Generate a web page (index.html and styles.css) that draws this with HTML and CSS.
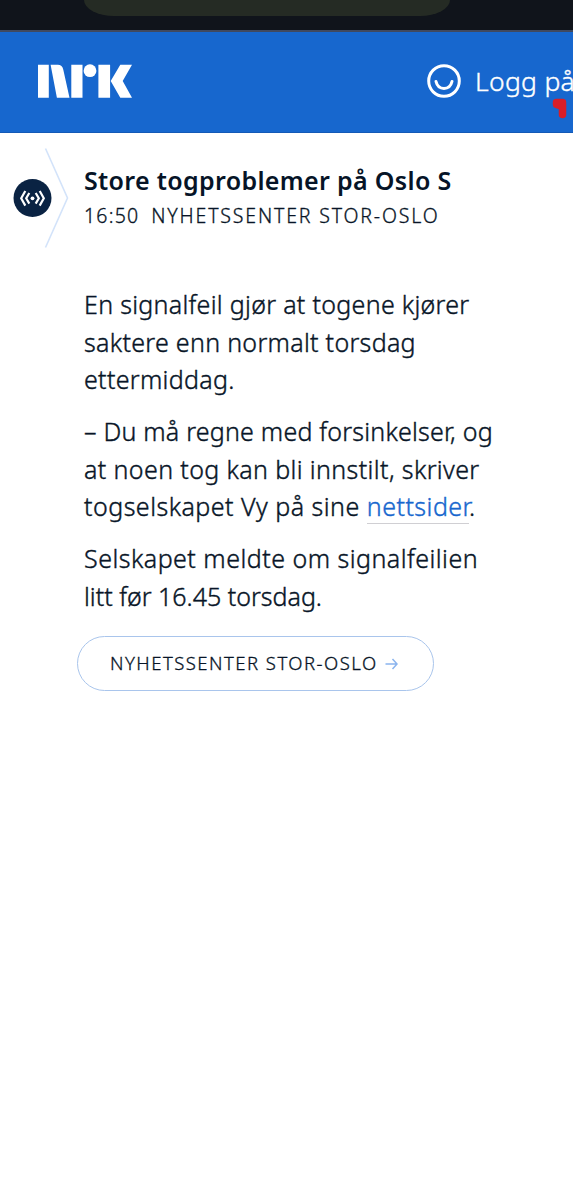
FILE: index.html
```html
<!DOCTYPE html>
<html lang="no">
<head>
<meta charset="utf-8">
<title>Store togproblemer på Oslo S</title>
<link rel="stylesheet" href="styles.css">
</head>
<body>
<div class="browser-bar"><div class="address-pill"></div></div>
<header class="site-header">
  <svg class="logo" viewBox="0 0 94 34" role="img" aria-label="NRK">
    <path d="M0 .8h10.800v32.900H0zM12.600.8h7.200q4.500 0 5.500 5l6.200 27.900H18.900zM33.300.8h11.200v32.900H33.300zM60.400.8h11.700v32.900H60.400zM82.300.8H94L84.700 17 94 33.700H82.300L72.700 17z"/>
    <circle cx="52" cy="6.700" r="6.400"/>
  </svg>
  <div class="login">
    <svg class="login-icon" viewBox="0 0 34 34"><circle cx="17" cy="17" r="15.300"/><path d="M9 17.500c2.200 9.300 13.800 9.300 16 0"/></svg>
    <span class="login-text">Logg på</span>
    <svg class="red-mark" viewBox="0 0 15 21"><path d="M4.500 4.500h6v12M4.500 4.500v2l6 2"/></svg>
  </div>
</header>
<main class="feed">
  <article class="post">
    <div class="marker">
      <svg class="marker-icon" viewBox="0 0 72 110">
        <path class="chevron" d="M45.500 8.500 67.500 58 45.500 107.500"/>
        <circle class="disc" cx="32.500" cy="58" r="19"/>
        <path class="waves" d="M25.300 51 21.200 58.300l4.100 7.300M29.300 53 26.200 58.300l3.100 5.300M39.700 51l4.100 7.300-4.100 7.300M35.700 53l3.100 5.300-3.100 5.300"/>
        <circle class="dot" cx="32.500" cy="58.300" r="1.900"/>
      </svg>
    </div>
    <div class="content">
      <h1 class="title">Store togproblemer på Oslo S</h1>
      <div class="meta"><time>16:50</time><span class="source">NYHETSSENTER STOR-OSLO</span></div>
      <div class="body">
        <p><span class="line l1">En signalfeil gjør at togene kjører</span> <span class="line l2">saktere enn normalt torsdag</span> <span class="line l3">ettermiddag.</span></p>
        <p><span class="line l4">– Du må regne med forsinkelser, og</span> <span class="line l5">at noen tog kan bli innstilt, skriver</span> <span class="line l6">togselskapet Vy på sine <a class="link">nettsider</a>.</span></p>
        <p><span class="line l7">Selskapet meldte om signalfeilien</span> <span class="line l8">litt før 16.45 torsdag.</span></p>
      </div>
      <a class="more"><span class="more-label">NYHETSSENTER STOR-OSLO</span><svg class="arrow" viewBox="0 0 13 12"><path d="M.5 6H12M7.500 1l4.500 5-4.500 5"/></svg></a>
    </div>
  </article>
</main>
</body>
</html>
```
FILE: styles.css
```css
* { box-sizing: border-box; }
body {
  margin: 0;
  min-height: 1200px;
  background: #fff;
  color: #081527;
  font-family: "Noto Sans", sans-serif;
  overflow: hidden;
}
.browser-bar {
  height: 32px;
  background: #10141b;
  border-bottom: 2px solid #40495f;
  padding-left: 84px;
}
.address-pill {
  width: 366px;
  height: 16px;
  background: #252b24;
  border-radius: 0 0 30px 30px / 0 0 16px 16px;
}
.site-header {
  height: 101px;
  background: #1767ce;
  display: flex;
  align-items: center;
  justify-content: space-between;
  padding: 0 0 2px 38px;
  border-bottom: 1px solid #1459b6;
}
.logo { width: 94px; height: 34px; fill: #fff; }
.login {
  position: relative;
  width: 146px;
  display: flex;
  align-items: center;
  gap: 14px;
  white-space: nowrap;
  color: #fff;
}
.login-icon { flex: none; width: 34px; height: 34px; fill: none; stroke: #fff; stroke-width: 3; stroke-linecap: round; }
.login-text { font-size: 26.5px; line-height: 36px; font-weight: 300; letter-spacing: .3px; -webkit-text-stroke: .4px currentColor; }
.red-mark { position: absolute; left: 125px; top: 35px; width: 15px; height: 21px; fill: none; stroke: #d81e28; stroke-width: 7.5; stroke-linecap: round; stroke-linejoin: round; }
.post { display: grid; grid-template-columns: 84px 1fr; padding-top: 7px; }
.marker-icon { display: block; width: 72px; height: 110px; fill: none; }
.chevron { stroke: #d3e3fa; stroke-width: 1.6; }
.disc { fill: #0a2343; }
.waves { stroke: #fff; stroke-width: 2.2; }
.dot { fill: #fff; }
.content { padding-top: 21px; }
.title { margin: 0; font-size: 25px; font-weight: 600; line-height: 38px; letter-spacing: .33px; color: #061427; white-space: nowrap; }
.meta { display: flex; gap: 12px; padding-top: 1px; font-size: 19.5px; line-height: 32px; font-weight: 300; letter-spacing: 1.2px; -webkit-text-stroke: .3px currentColor; }
.source { letter-spacing: 1.83px; }
.body { padding-top: 54px; font-size: 25px; line-height: 37.5px; font-weight: 300; -webkit-text-stroke: .4px currentColor; }
.body p { margin: 0 0 14.5px; }
.line { display: block; white-space: nowrap; }
.l1, .l2, .l3 { letter-spacing: .3px; }
.l4 { letter-spacing: .22px; }
.l5 { letter-spacing: .38px; }
.l6, .l7 { letter-spacing: .48px; }
.link { color: #1767ce; border-bottom: 1.5px solid #d0cfd3; }
.more {
  display: flex;
  align-items: center;
  width: 357px;
  height: 55px;
  margin: 20.5px 0 0 -7px;
  padding: 0 0 2px 32px;
  border: 1.3px solid #a9c5ec;
  border-radius: 28px;
  font-size: 18.5px;
  font-weight: 300;
  letter-spacing: 1.47px;
  -webkit-text-stroke: .3px currentColor;
  gap: 7px;
  white-space: nowrap;
}
.arrow { width: 13px; height: 12px; margin-top: 3px; fill: none; stroke: #8bb4ee; stroke-width: 1.5; }
```
